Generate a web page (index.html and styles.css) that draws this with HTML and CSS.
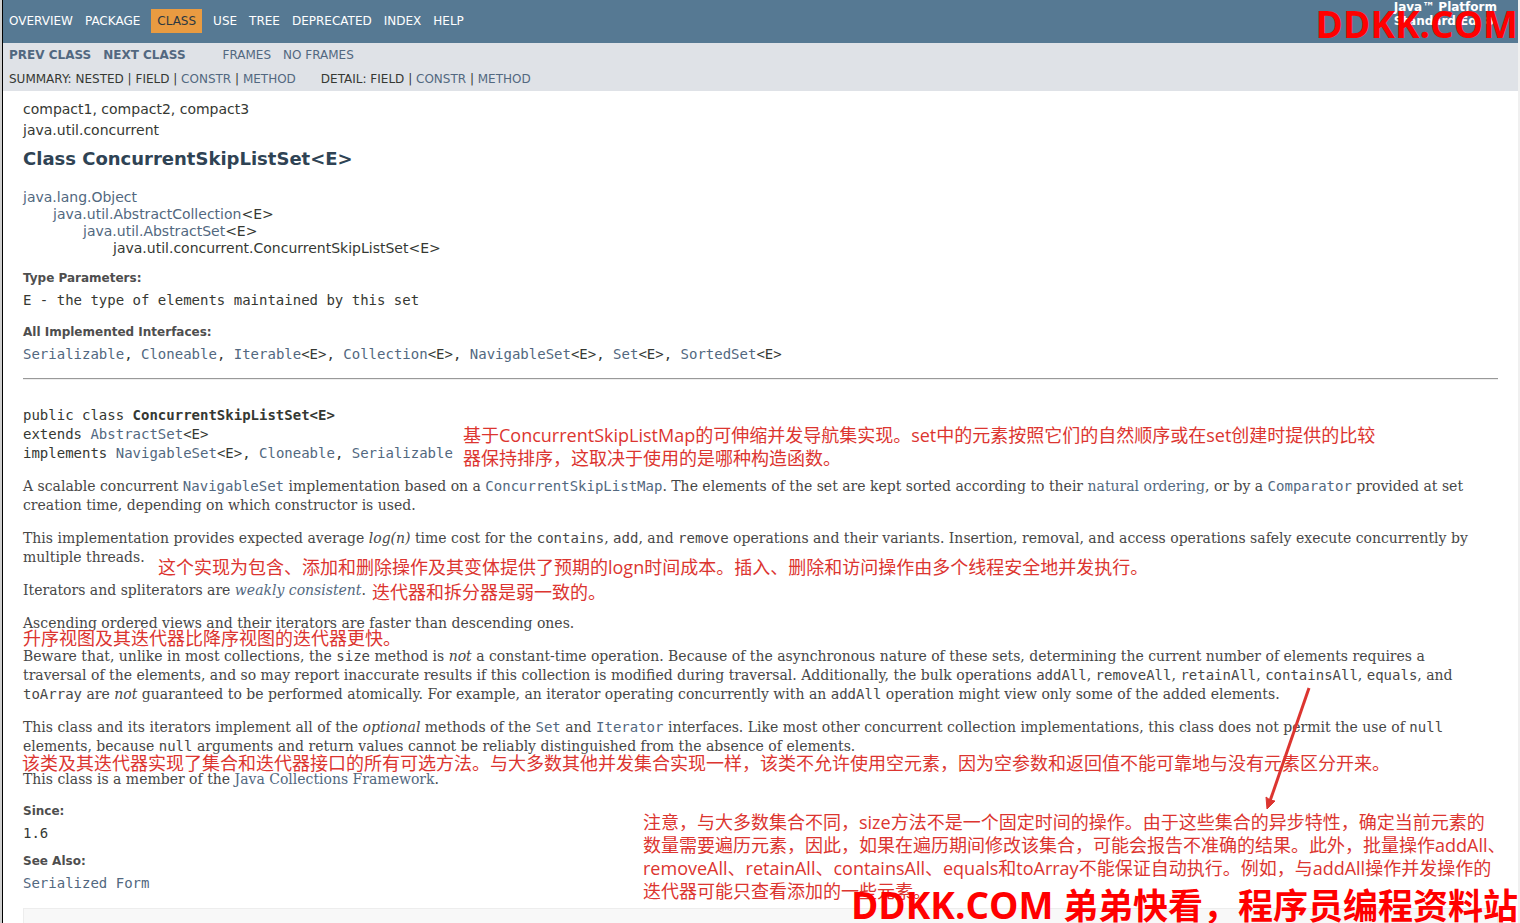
FILE: index.html
```html
<!DOCTYPE html>
<html lang="en">
<head>
<meta charset="utf-8">
<title>ConcurrentSkipListSet (Java Platform SE 8)</title>
<link rel="stylesheet" href="styles.css">
</head>
<body>
<div class="page">
  <header class="top-nav">
    <nav>
      <ul class="nav-list">
        <li><a href="#">Overview</a></li>
        <li><a href="#">Package</a></li>
        <li class="current">Class</li>
        <li><a href="#">Use</a></li>
        <li><a href="#">Tree</a></li>
        <li><a href="#">Deprecated</a></li>
        <li><a href="#">Index</a></li>
        <li><a href="#">Help</a></li>
      </ul>
    </nav>
    <div class="about">Java™ Platform<br>Standard Ed. 8</div>
  </header>
  <div class="sub-nav">
    <div class="sub-row">
      <a class="strong" href="#">Prev Class</a><a class="strong" href="#">Next Class</a>
      <span class="frames"><a href="#">Frames</a><a href="#">No Frames</a></span>
    </div>
    <div class="sub-row details">
      <span>Summary: Nested | Field | <a href="#">Constr</a> | <a href="#">Method</a></span>
      <span>Detail: Field | <a href="#">Constr</a> | <a href="#">Method</a></span>
    </div>
  </div>
  <main class="content">
    <div class="sub-title">compact1, compact2, compact3</div>
    <div class="sub-title">java.util.concurrent</div>
    <h2>Class ConcurrentSkipListSet&lt;E&gt;</h2>
    <ul class="tree">
      <li><a href="#">java.lang.Object</a>
        <ul>
          <li><a href="#">java.util.AbstractCollection</a>&lt;E&gt;
            <ul>
              <li><a href="#">java.util.AbstractSet</a>&lt;E&gt;
                <ul><li>java.util.concurrent.ConcurrentSkipListSet&lt;E&gt;</li></ul>
              </li>
            </ul>
          </li>
        </ul>
      </li>
    </ul>
    <dl>
      <dt>Type Parameters:</dt>
      <dd>E - the type of elements maintained by this set</dd>
      <dt>All Implemented Interfaces:</dt>
      <dd><a href="#">Serializable</a>, <a href="#">Cloneable</a>, <a href="#">Iterable</a>&lt;E&gt;, <a href="#">Collection</a>&lt;E&gt;, <a href="#">NavigableSet</a>&lt;E&gt;, <a href="#">Set</a>&lt;E&gt;, <a href="#">SortedSet</a>&lt;E&gt;</dd>
    </dl>
    <hr>
    <pre>public class <b>ConcurrentSkipListSet&lt;E&gt;</b>
extends <a href="#">AbstractSet</a>&lt;E&gt;
implements <a href="#">NavigableSet</a>&lt;E&gt;, <a href="#">Cloneable</a>, <a href="#">Serializable</a></pre>
    <div class="block">
      <p>A scalable concurrent <a href="#"><code>NavigableSet</code></a> implementation based on a <a href="#"><code>ConcurrentSkipListMap</code></a>. The elements of the set are kept sorted according to their <a href="#">natural ordering</a>, or by a <a href="#"><code>Comparator</code></a> provided at set creation time, depending on which constructor is used.</p>
      <p>This implementation provides expected average <i>log(n)</i> time cost for the <code>contains</code>, <code>add</code>, and <code>remove</code> operations and their variants. Insertion, removal, and access operations safely execute concurrently by multiple threads.</p>
      <p>Iterators and spliterators are <a href="#"><i>weakly consistent</i></a>.</p>
      <p>Ascending ordered views and their iterators are faster than descending ones.</p>
      <p>Beware that, unlike in most collections, the <code>size</code> method is <em>not</em> a constant-time operation. Because of the asynchronous nature of these sets, determining the current number of elements requires a traversal of the elements, and so may report inaccurate results if this collection is modified during traversal. Additionally, the bulk operations <code>addAll</code>, <code>removeAll</code>, <code>retainAll</code>, <code>containsAll</code>, <code>equals</code>, and <code>toArray</code> are <em>not</em> guaranteed to be performed atomically. For example, an iterator operating concurrently with an <code>addAll</code> operation might view only some of the added elements.</p>
      <p>This class and its iterators implement all of the <em>optional</em> methods of the <a href="#"><code>Set</code></a> and <a href="#"><code>Iterator</code></a> interfaces. Like most other concurrent collection implementations, this class does not permit the use of <code>null</code> elements, because <code>null</code> arguments and return values cannot be reliably distinguished from the absence of elements.</p>
      <p>This class is a member of the <a href="#">Java Collections Framework</a>.</p>
    </div>
    <dl class="meta">
      <dt>Since:</dt>
      <dd>1.6</dd>
      <dt>See Also:</dt>
      <dd><a href="#">Serialized Form</a></dd>
    </dl>
    <section class="summary-box"></section>
  </main>
</div>

<div class="note note-class" lang="zh">基于ConcurrentSkipListMap的可伸缩并发导航集实现。set中的元素按照它们的自然顺序或在set创建时提供的比较<br>器保持排序，这取决于使用的是哪种构造函数。</div>
<div class="note note-cost" lang="zh">这个实现为包含、添加和删除操作及其变体提供了预期的logn时间成本。插入、删除和访问操作由多个线程安全地并发执行。</div>
<div class="note note-weak" lang="zh">迭代器和拆分器是弱一致的。</div>
<div class="note note-order" lang="zh">升序视图及其迭代器比降序视图的迭代器更快。</div>
<div class="note note-null" lang="zh">该类及其迭代器实现了集合和迭代器接口的所有可选方法。与大多数其他并发集合实现一样，该类不允许使用空元素，因为空参数和返回值不能可靠地与没有元素区分开来。</div>
<div class="note note-size" lang="zh">注意，与大多数集合不同，size方法不是一个固定时间的操作。由于这些集合的异步特性，确定当前元素的<br>数量需要遍历元素，因此，如果在遍历期间修改该集合，可能会报告不准确的结果。此外，批量操作addAll、<br>removeAll、retainAll、containsAll、equals和toArray不能保证自动执行。例如，与addAll操作并发操作的<br>迭代器可能只查看添加的一些元素。</div>
<svg class="arrow" width="50" height="126" viewBox="0 0 50 126" aria-hidden="true">
  <path d="M47 1 L8 114" stroke="#dc3530" stroke-width="3" fill="none"/>
  <path d="M5 122 L4 110 L8 113 L13 114 Z" fill="#dc3530" stroke="#dc3530"/>
</svg>
<div class="watermark watermark-top">DDKK.COM</div>
<div class="watermark watermark-bottom" lang="zh">DDKK.COM <span>弟弟快看，程序员编程资料站</span></div>
</body>
</html>
```
FILE: styles.css
```css
* { box-sizing: border-box; }
body {
  margin: 0;
  position: relative;
  height: 100vh;
  overflow: hidden;
  background: #fff;
  color: #353833;
  font: 14px/17px "DejaVu Sans", sans-serif;
}
.page {
  display: flex;
  flex-direction: column;
  height: 100%;
  border-left: 1px solid #000;
  border-right: 2px solid #f0f0f0;
  margin-left: 2px;
  box-shadow: -2px 0 #d0d0d0;
}
a { color: #526880; text-decoration: none; }
ul { list-style: none; margin: 0; padding: 0; }

.top-nav {
  display: flex;
  justify-content: space-between;
  height: 43px;
  padding: 0 21px 0 6px;
  background: #567993;
  color: #fff;
  font-size: 12px;
}
.nav-list { display: flex; gap: 12px; padding-top: 9px; line-height: 24px; text-transform: uppercase; }
.nav-list a { color: #fff; }
.nav-list .current { background: #e99b41; color: #2c3841; padding: 0 6px; margin: 0 -1px; }
.about { font-weight: bold; line-height: 14px; }

.sub-nav { background: #dfe2e7; padding: 0 6px; font-size: 12px; line-height: 24px; text-transform: uppercase; }
.sub-row { display: flex; gap: 12px; }
.strong { font-weight: bold; }
.frames { display: flex; gap: 12px; margin-left: 25px; }
.details { gap: 25px; }

.content { flex: 1; display: flex; flex-direction: column; padding: 8px 20px 0; }
.sub-title { line-height: 21px; }
h2 { margin: 6px 0 0; font-size: 18px; line-height: 23px; color: #2f4354; }
.tree { margin-top: 19px; }
.tree ul { padding-left: 30px; }
dl { margin: 12px 0 0; font-size: 14px; }
dt { font-size: 12px; font-weight: bold; line-height: 19px; color: #4e4e4e; }
dd { margin: 2px 0 13px; font-family: "DejaVu Sans Mono", monospace; line-height: 20px; }
hr { width: 100%; margin: 1px 0 0; border: 0; border-top: 1px solid #999; border-bottom: 1px solid #eee; }
pre { margin: 26px 0 0; font: 14px/19px "DejaVu Sans Mono", monospace; }
code { font: 14px/19px "DejaVu Sans Mono", monospace; }
.block { padding-right: 10px; color: #474747; font-family: "DejaVu Serif", Georgia, serif; line-height: 19px; }
.block p { margin: 14px 0 0; }
.meta { margin-top: 13px; }
.meta dd { margin-bottom: 9px; }
.summary-box { flex: 1; margin-top: 6px; border: 1px solid #ededed; border-bottom: 0; background: #f8f8f8; }

.note {
  position: absolute;
  color: #dc3530;
  font: 18px/23px "Open Sans", "Noto Sans CJK SC", sans-serif;
  white-space: nowrap;
}
.note-class { left: 463px; top: 424px; }
.note-cost { left: 158px; top: 556px; }
.note-weak { left: 372px; top: 581px; }
.note-order { left: 23px; top: 627px; }
.note-null { left: 22px; top: 752px; }
.note-size { left: 643px; top: 811px; }
.arrow { position: absolute; left: 1262px; top: 687px; }
.watermark {
  position: absolute;
  right: 2px;
  color: #f00;
  font: bold 37px/40px "Open Sans", "Noto Sans CJK SC", sans-serif;
  white-space: nowrap;
}
.watermark span { font-size: 35px; }
.watermark-top { top: 4px; }
.watermark-bottom { top: 885px; }
```
